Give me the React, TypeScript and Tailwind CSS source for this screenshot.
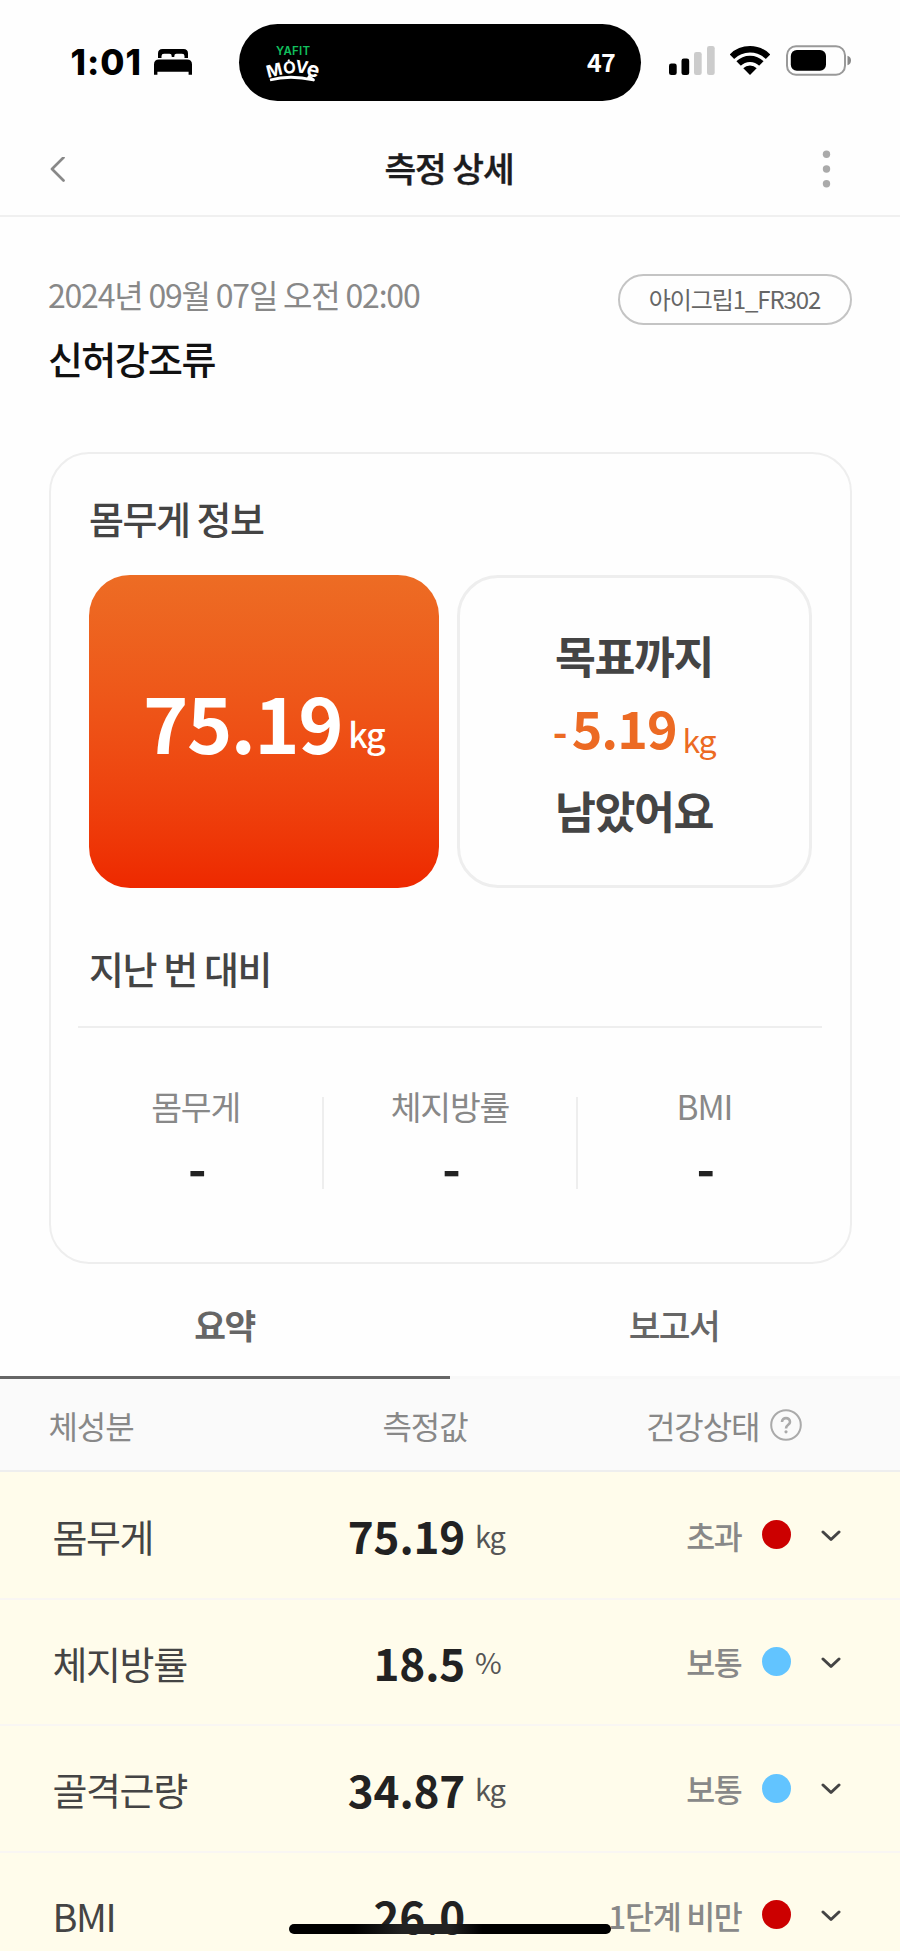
import React from 'react';

type Row = { label: string; value: string; unit: string; status: string; level: 'over' | 'normal' };

const rows: Row[] = [
  { label: '몸무게', value: '75.19', unit: 'kg', status: '초과', level: 'over' },
  { label: '체지방률', value: '18.5', unit: '%', status: '보통', level: 'normal' },
  { label: '골격근량', value: '34.87', unit: 'kg', status: '보통', level: 'normal' },
  { label: 'BMI', value: '26.0', unit: '', status: '1단계 비만', level: 'over' },
];

function BedIcon() {
  return (
    <svg className="ml-[12px] mt-[49px] h-[26px] w-[38px] shrink-0" viewBox="0 0 38 26">
      <path d="M4 9V4.5Q4 0 8.500 0H29.500Q34 0 34 4.500V9H30.500V7Q30.500 4.800 28 4.800H22.500Q20.300 4.800 20.300 7V8H17.700V7Q17.700 4.800 15.500 4.800H10Q7.500 4.800 7.500 7V9Z" fill="#000" />
      <path d="M0 15.500Q0 10.500 5 10.500H33Q38 10.500 38 15.500V25.800H34.600V22.800H3.400V25.800H0Z" fill="#000" />
    </svg>
  );
}

function MoveLogo() {
  return (
    <svg className="ml-[25px] mt-[21px] h-[38px] w-[56px]" viewBox="0 0 56 38">
      <g fontFamily="Inter, sans-serif" textAnchor="middle">
        <text x="29" y="10.200" fontSize="11.500" fontWeight="600" fill="#12c05e" textLength="34" lengthAdjust="spacing">YAFIT</text>
        <g fill="#fff" fontSize="17" fontWeight="700">
          <text transform="translate(11.800 31) rotate(-14)">M</text>
          <text transform="translate(25.800 28.300) rotate(-4)" fontSize="16.500">O</text>
          <text transform="translate(37 28) rotate(8)">V</text>
          <text transform="translate(47.500 31.500) rotate(14)" fontSize="21">e</text>
        </g>
      </g>
      <path d="M24 16.200L25.500 14.600" stroke="#fff" strokeWidth="1.600" />
      <path d="M6 35Q26 29.500 49.500 35L44 31" fill="none" stroke="#fff" strokeWidth="2.800" strokeLinejoin="round" />
    </svg>
  );
}

function SignalIcon() {
  return (
    <svg className="mt-[46px] h-[29px] w-[46px] shrink-0" viewBox="0 0 46 29">
      <rect x="0" y="17.500" width="7.700" height="11.500" rx="2.300" fill="#000" />
      <rect x="12.500" y="12.500" width="7.700" height="16.500" rx="2.300" fill="#000" />
      <rect x="25" y="6" width="7.700" height="23" rx="2.300" fill="#ccc" />
      <rect x="38" y="0" width="7.700" height="29" rx="2.300" fill="#ccc" />
    </svg>
  );
}

function WifiIcon() {
  return (
    <svg className="ml-[15px] mt-[46px] h-[29px] w-[40px] shrink-0" viewBox="0 0 40 29">
      <clipPath id="fan"><path d="M20 29L-8 .5V-5H48V.5Z" /></clipPath>
      <g clipPath="url(#fan)">
        <circle cx="20" cy="29" r="25.700" fill="none" stroke="#000" strokeWidth="6.400" />
        <circle cx="20" cy="29" r="16.200" fill="none" stroke="#000" strokeWidth="6.200" />
        <circle cx="20" cy="29" r="9.600" fill="#000" />
      </g>
    </svg>
  );
}

function BatteryIcon() {
  return (
    <svg className="ml-[16px] mt-[45px] h-[31px] w-[66px] shrink-0" viewBox="0 0 66 31">
      <rect x="1" y="1.200" width="58" height="28.600" rx="9" fill="none" stroke="#999" strokeWidth="2" />
      <rect x="4.800" y="5" width="35.200" height="20.800" rx="6" fill="#000" />
      <path d="M61.500 10.800Q65 12 65 15.500T61.500 20.200Z" fill="#888" />
    </svg>
  );
}

function StatusBar() {
  return (
    <div className="flex h-[108px]">
      <div className="flex w-[239px] pl-[70.500px]">
        <span className="mt-[41.500px] w-[71px] whitespace-nowrap font-[Inter,sans-serif] text-[35px] leading-[40px] font-extrabold tracking-[1px] text-black">1:01</span>
        <BedIcon />
      </div>
      <div className="mt-[24px] flex h-[77px] w-[402px] justify-between rounded-full bg-black">
        <MoveLogo />
        <span className="mr-[26px] mt-[22px] text-[25px] leading-[30px] font-bold tracking-[-0.800px] text-white">47</span>
      </div>
      <div className="flex pl-[28px]">
        <SignalIcon />
        <WifiIcon />
        <BatteryIcon />
      </div>
    </div>
  );
}

function Header() {
  return (
    <header className="flex h-[109px] items-center justify-between border-b-2 border-[#f0f0f0] pr-[69px] pl-[50px]">
      <svg className="mt-[17px] h-[26px] w-[15px]" viewBox="0 0 15 26">
        <path d="M13.500 1.500L2 13L13.500 24.500" fill="none" stroke="#888" strokeWidth="2.700" strokeLinecap="round" strokeLinejoin="round" transform="translate(0 -1)" />
      </svg>
      <h1 className="mt-[11px] ml-[16px] text-[34.500px] leading-[50px] font-medium tracking-[-1.100px] text-[#1c1c1e] [-webkit-text-stroke:0.400px_#1c1c1e]">측정 상세</h1>
      <svg className="mt-[15px] h-[38px] w-[14px]" viewBox="0 0 14 38" fill="#aaa">
        <circle cx="9.500" cy="4.300" r="3.700" />
        <circle cx="9.500" cy="19" r="3.700" />
        <circle cx="9.500" cy="33.700" r="3.700" />
      </svg>
    </header>
  );
}

function WeightCard() {
  return (
    <section className="mx-[48.500px] mt-[52px] h-[812px] rounded-[40px] border-2 border-[#eee] pt-[34px]">
      <h2 className="pl-[38.500px] text-[38px] leading-[60px] font-medium tracking-[-1.500px] text-[#444]">몸무게 정보</h2>
      <div className="mt-[27px] ml-[38px] flex gap-[18px]">
        <div className="flex h-[313px] w-[350px] justify-center rounded-[41px] bg-gradient-to-b from-[#ed6c24] to-[#ee2800] text-white">
          <span className="mt-[86px] text-[77px] leading-[120px] font-bold tracking-[-1.500px]">75.19</span>
          <span className="mt-[129px] ml-[6px] text-[34px] leading-[60px] font-medium tracking-[-1.500px]">kg</span>
        </div>
        <div className="flex h-[313px] w-[355px] flex-col items-center rounded-[41px] border-3 border-[#eee] text-[#444]">
          <p className="mt-[42px] text-[44.500px] leading-[70px] font-bold tracking-[-1.500px]">목표까지</p>
          <p className="flex h-[85px] text-[#ec6a23]">
            <span className="mt-[5px] text-[40px] leading-[70px] font-bold">-</span>
            <span className="mt-[2px] ml-[4px] text-[52px] leading-[70px] font-bold tracking-[-1px]">5.19</span>
            <span className="mt-[14px] ml-[6px] text-[32px] leading-[70px] tracking-[-1.400px]">kg</span>
          </p>
          <p className="text-[44.500px] leading-[70px] font-bold tracking-[-1.500px]">남았어요</p>
        </div>
      </div>
      <h2 className="mt-[50px] pl-[38.500px] text-[38px] leading-[60px] font-medium tracking-[-1.400px] text-[#444]">지난 번 대비</h2>
      <div className="mx-[27.500px] mt-[28px] h-[2px] bg-[#eee]" />
      <div className="mr-[17px] ml-[19px] mt-[51px] grid grid-cols-3 text-center">
        {['몸무게', '체지방률', 'BMI'].map((name, i) => (
          <div key={name} className="relative">
            <p className="pr-[2px] text-[33.500px] leading-[54px] tracking-[-1.200px] text-[#888]">{name}</p>
            <p className="mt-[1px] pl-[1px] text-[50px] leading-[64px] font-bold text-[#222]">-</p>
            {i < 2 && <i className="absolute top-[18px] right-0 h-[92px] w-[2px] bg-[#eee]" />}
          </div>
        ))}
      </div>
    </section>
  );
}

function ResultRow({ row }: { row: Row }) {
  return (
    <div className="flex h-[126.700px] items-center border-b-[2px] border-[#f9f6f3] bg-[#fffceb] whitespace-nowrap">
      <span className="w-[240px] pl-[52.500px] text-[38px] tracking-[-1.400px] text-[#444]">{row.label}</span>
      <span className="w-[225px] text-right text-[44px] font-bold tracking-[-0.200px] text-[#222]">{row.value}</span>
      <span className="w-[80px] pl-[10px] text-[29px] tracking-[-1.200px] text-[#555]">{row.unit}</span>
      <span className="w-[196.500px] text-right text-[31.500px] font-medium tracking-[-1.300px] text-[#888]">{row.status}</span>
      <i className={`-mt-[1px] ml-[20.500px] size-[29px] shrink-0 rounded-full ${row.level === 'over' ? 'bg-[#cc0000]' : 'bg-[#62c4ff]'}`} />
      <svg className="mt-[1px] ml-[29.500px] h-[12px] w-[20px] shrink-0" viewBox="0 0 20 12">
        <path d="M2 2L10 9.500L18 2" fill="none" stroke="#444" strokeWidth="3" strokeLinecap="round" strokeLinejoin="round" />
      </svg>
    </div>
  );
}

export default function App() {
  return (
    <div className="relative h-[1951px] w-[900px] overflow-hidden bg-[#fefefe] font-['Noto_Sans_CJK_KR',sans-serif]">
      <StatusBar />
      <Header />
      <section className="flex h-[183px] justify-between pr-[48.500px] pl-[48px]">
        <div className="pt-[51px]">
          <p className="text-[32px] leading-[52px] tracking-[-1.200px] text-[#888]">2024년 09월 07일 오전 02:00</p>
          <p className="mt-[8px] text-[38px] leading-[60px] font-medium tracking-[-1.600px] text-[#111]">신허강조류</p>
        </div>
        <span className="mt-[57px] flex h-[51px] w-[234px] items-center justify-center rounded-full border-2 border-[#c4c4c4] pb-[1px] text-[24px] tracking-[-1.100px] text-[#666]">아이그립1_FR302</span>
      </section>
      <WeightCard />
      <nav className="grid h-[115px] grid-cols-2 text-center text-[34.500px] text-[#666]">
        <span className="border-b-[3px] border-[#666] pt-[33px] pr-[1px] leading-[54px] font-bold tracking-[-1.400px]">요약</span>
        <span className="border-b-[3px] border-[#f8f8f8] pt-[33px] pr-[2px] leading-[54px] font-medium tracking-[-1.500px]">보고서</span>
      </nav>
      <div className="flex h-[93px] items-center border-b-2 border-[#eee] bg-[#fafafa] pl-[48.500px] text-[32px] tracking-[-1.100px] text-[#888]">
        <span className="w-[334px]">체성분</span>
        <span className="w-[263.500px]">측정값</span>
        <span>건강상태</span>
        <svg className="mt-[1px] ml-[10.500px] h-[32px] w-[32px]" viewBox="0 0 32 32" fill="none" stroke="#aaa">
          <circle cx="16" cy="16" r="14.800" strokeWidth="2" />
          <path d="M12 13C12 7.800 20 7.800 20 13C20 16 16 15.500 16 19.500" strokeWidth="2.600" />
          <circle cx="16" cy="22.800" r="1.600" fill="#aaa" stroke="none" />
        </svg>
      </div>
      <div className="bg-[#fffceb] pt-[1px]">
        {rows.map((row) => <ResultRow key={row.label} row={row} />)}
      </div>
      <div className="absolute top-[1923.500px] left-[289px] h-[10.500px] w-[322px] rounded-full bg-[linear-gradient(90deg,#000_20%,#222_35%,#222_50%,#000_60%)]" />
    </div>
  );
}
